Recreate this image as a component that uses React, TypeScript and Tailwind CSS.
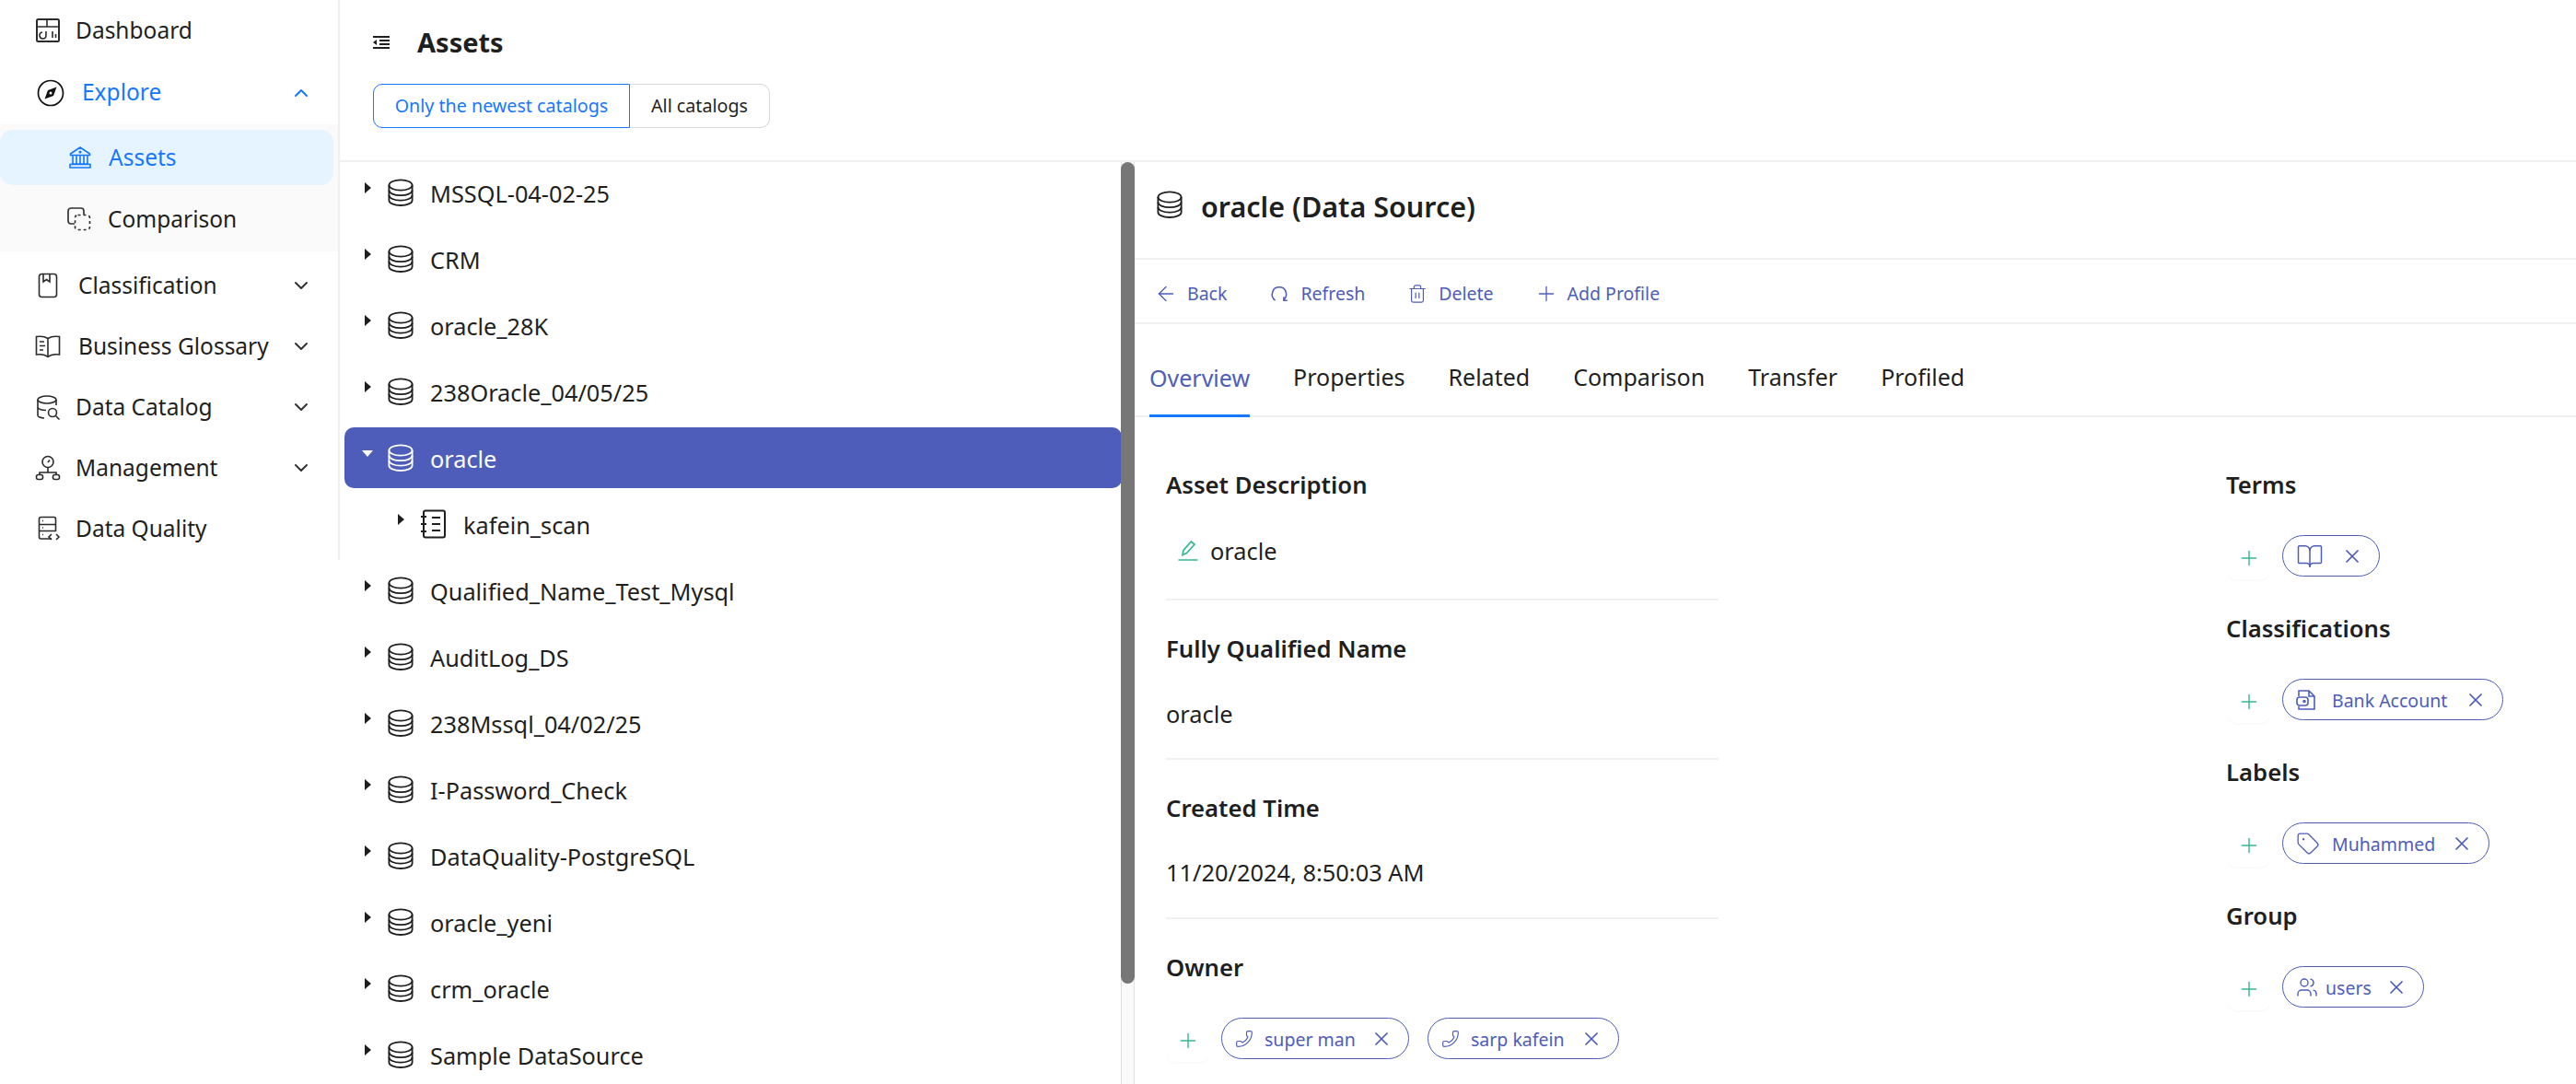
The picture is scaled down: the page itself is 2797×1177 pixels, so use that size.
import React from "react";
import { ChevronUp, ChevronDown, BookOpen, Plus, X, ArrowLeft, Trash2, Tag, Users, Phone } from "lucide-react";

const ink = "text-[#1f1f1f]";

function Db({ className = "" }: { className?: string }) {
  return (
    <svg viewBox="0 0 28 30" fill="none" stroke="currentColor" strokeWidth="1.8" className={className}>
      <ellipse cx="14" cy="7" rx="12.6" ry="5.6" />
      <path d="M1.4 7v16.4c0 3.1 5.6 5.6 12.6 5.6s12.6-2.5 12.6-5.6V7" />
      <path d="M1.4 12.6c0 3.1 5.6 5.6 12.6 5.6s12.6-2.5 12.6-5.6" />
      <path d="M1.4 18c0 3.1 5.6 5.6 12.6 5.6s12.6-2.5 12.6-5.6" />
    </svg>
  );
}

function NavIcon({ name }: { name: string }) {
  const c = "w-[28px] h-[28px] text-[#2b2b2b]";
  const p = { viewBox: "0 0 28 28", fill: "none", stroke: "currentColor", strokeWidth: 1.6, className: c };
  if (name === "dash")
    return (
      <svg {...p} strokeWidth={2}>
        <rect x="2" y="2" width="24" height="24" rx="1.5" />
        <path d="M2 10h24M13 2v8" strokeWidth={1.6} />
        <path d="M8 16a3.500 3.500 0 1 0 4 3.500V15M19 15v7M22.500 18v4" strokeWidth={1.6} />
      </svg>
    );
  if (name === "class")
    return (
      <svg {...p}>
        <rect x="4.500" y="1.500" width="19" height="25" rx="3" />
        <path d="M9 2v8l3.500-2.500L16 10V2" />
      </svg>
    );
  if (name === "book")
    return (
      <svg {...p}>
        <path d="M14 5.500C11 3.500 6 3 1.500 3.500V23c4.500-.6 9.500 0 12.500 2.500 3-2.500 8-3.100 12.500-2.500V3.500C22 3 17 3.500 14 5.500zM14 5.500v20" />
        <path d="M5 9h5M5 13.500h6M5 18h4" />
      </svg>
    );
  if (name === "catalog")
    return (
      <svg {...p}>
        <ellipse cx="13" cy="6" rx="10" ry="4" />
        <path d="M3 6v17c0 1.600 3 3 7 3M23 6v6M3 14c0 2 4 3.500 9 3.500" />
        <circle cx="19" cy="20" r="4.500" />
        <path d="M22.500 23.500l4 4" />
      </svg>
    );
  if (name === "mgmt")
    return (
      <svg {...p}>
        <circle cx="14" cy="7.500" r="6" />
        <path d="M14 8l2-2.500M14 13.500V19M5 22v-3h18v3" />
        <rect x="1.500" y="21.500" width="7" height="5" rx="2" />
        <rect x="19.500" y="21.500" width="7" height="5" rx="2" />
      </svg>
    );
  return (
    <svg {...p}>
      <path d="M18 25H6.500A2 2 0 0 1 4.500 23V3.500a2 2 0 0 1 2-2h14a2 2 0 0 1 2 2V17M4.500 9.500h18M4.500 16.500h18" />
      <path d="M8 5.500h1M8 13h1M8 20.500h1" />
      <path d="M18 20l-3 3 3 3M23 20l3 3-3 3" />
    </svg>
  );
}

function NavRow({ icon, label, gap, chevron }: { icon: string; label: string; gap: string; chevron?: boolean }) {
  return (
    <div className="flex items-center h-[66px] pl-[38px] pr-[28px]">
      <NavIcon name={icon} />
      <span className={`${gap} ${ink}`}>{label}</span>
      {chevron && <ChevronDown className="ml-auto w-[24px] h-[24px] text-[#333]" strokeWidth={2} />}
    </div>
  );
}

function Sidebar() {
  return (
    <aside className="w-[369px] shrink-0 h-[608px] border-r-2 border-[#f0f0f0] text-[24.5px]">
      <NavRow icon="dash" label="Dashboard" gap="ml-[16px]" />
      <div className="flex items-center pl-[40px] pr-[28px] h-[69px]">
        <svg viewBox="0 0 30 30" className="w-[30px] h-[30px]">
          <circle cx="15" cy="15" r="13.500" fill="none" stroke="#111" strokeWidth="1.7" />
          <path d="M21.500 8.500L18 18 8.500 21.500 12 12z" fill="#111" />
          <circle cx="15" cy="15" r="1.500" fill="#fff" />
        </svg>
        <span className="ml-[19px] text-[#1677ff]">Explore</span>
        <ChevronUp className="ml-auto w-[24px] h-[24px] text-[#1677ff]" strokeWidth={2} />
      </div>
      <div className="bg-[#fafafa] h-[138px] pt-[6px]">
        <div className="flex items-center h-[60px] w-[362px] rounded-[14px] bg-[#e6f4ff] pl-[75px] text-[#1677ff]">
          <svg viewBox="0 0 24 24" fill="none" stroke="currentColor" strokeWidth="1.6" className="w-[24px] h-[24px]">
            <path d="M12 1L1.500 8v1.500h21V8zM4 9.500V19M8 9.500V19M16 9.500V19M20 9.500V19M12 9.500V19M2.500 19h19M1 23h22v-3.500H1z" />
            <circle cx="12" cy="6" r="0.8" fill="currentColor" />
          </svg>
          <span className="ml-[19px]">Assets</span>
        </div>
        <div className="flex items-center h-[66px] mt-[4px] pl-[73px]">
          <svg viewBox="0 0 26 26" fill="none" stroke="#333" strokeWidth="1.7" className="w-[26px] h-[26px]">
            <path d="M8 18H4a3 3 0 0 1-3-3V4a3 3 0 0 1 3-3h11a3 3 0 0 1 3 3v4" />
            <rect x="8.500" y="8.500" width="16" height="16" rx="3" strokeDasharray="3 3" />
          </svg>
          <span className={`ml-[18px] ${ink}`}>Comparison</span>
        </div>
      </div>
      <div className="h-[4px]" />
      <NavRow icon="class" label="Classification" gap="ml-[19px]" chevron />
      <NavRow icon="book" label="Business Glossary" gap="ml-[19px]" chevron />
      <NavRow icon="catalog" label="Data Catalog" gap="ml-[16px]" chevron />
      <NavRow icon="mgmt" label="Management" gap="ml-[16px]" chevron />
      <NavRow icon="dq" label="Data Quality" gap="ml-[16px]" />
    </aside>
  );
}

const nodes = ["MSSQL-04-02-25", "CRM", "oracle_28K", "238Oracle_04/05/25", "oracle", "kafein_scan", "Qualified_Name_Test_Mysql", "AuditLog_DS", "238Mssql_04/02/25", "I-Password_Check", "DataQuality-PostgreSQL", "oracle_yeni", "crm_oracle", "Sample DataSource"];

function Tree() {
  return (
    <div className="w-[863px] shrink-0 relative overflow-hidden text-[25.3px] pl-[5px]">
      {nodes.map((n) => {
        const sel = n === "oracle";
        const child = n === "kafein_scan";
        return (
          <div key={n} className={`flex items-center h-[66px] mb-[6px] w-[844px] rounded-[10px] ${sel ? "bg-[#4d5db9] text-white" : ink} ${child ? "pl-[56px]" : "pl-[20px]"}`}>
            <span className="w-[10px] h-[10px] -mt-[10px] flex items-center justify-center">
              {sel ? (
                <span className="border-x-[6px] border-x-transparent border-t-[7px] border-t-white" />
              ) : (
                <span className="border-y-[6px] border-y-transparent border-l-[7px] border-l-[#1f1f1f]" />
              )}
            </span>
            {child ? (
              <svg viewBox="0 0 28 32" fill="none" stroke="currentColor" strokeWidth="2" className="ml-[16px] w-[28px] h-[32px]">
                <rect x="4" y="1.500" width="23" height="29" rx="2" />
                <path d="M1 8h6M1 16h6M1 24h6M13 9h9M13 16h9M13 23h9" />
              </svg>
            ) : (
              <Db className="ml-[17px] w-[28px] h-[30px]" />
            )}
            <span className={`${child ? "ml-[19px]" : "ml-[18px]"} mt-[3px]`}>{n}</span>
          </div>
        );
      })}
      <div className="absolute right-0 top-0 bottom-0 w-[15px] bg-[#fafafa] border-x border-[#e0e0e0]">
        <div className="h-[892px] -mx-px rounded-full bg-[#777777]" />
      </div>
    </div>
  );
}

function AddBtn() {
  return (
    <span className="w-[47px] h-[47px] mt-[1px] shrink-0 rounded-[10px] bg-white shadow-[0_2px_0_rgba(0,0,0,0.02)] flex items-center justify-center">
      <Plus className="w-[26px] h-[26px] text-[#36b795]" strokeWidth={1.3} />
    </span>
  );
}

function Chip({ icon, label, width, gap = "ml-[14px]" }: { icon: React.ReactNode; label?: string; width: string; gap?: string }) {
  return (
    <span className={`${width} h-[45px] ml-[13px] rounded-full border-[1.5px] border-[#4d5db9] flex items-center pl-[14px] text-[19.5px] text-[#4d5db9]`}>
      {icon}
      {label && <span className={`${gap} mt-[2px]`}>{label}</span>}
      <X className="ml-auto mr-[17px] w-[24px] h-[24px]" strokeWidth={1.7} />
    </span>
  );
}

function Side({ title, children, mt }: { title: string; children: React.ReactNode; mt: string }) {
  return (
    <div className={mt}>
      <div className={`text-[25.7px] leading-[34px] font-semibold ${ink}`}>{title}</div>
      <div className="flex items-start mt-[37px] ml-[1px]">{children}</div>
    </div>
  );
}

function Field({ title, children, h }: { title: string; children: React.ReactNode; h: string }) {
  return (
    <div className={`${h} border-b-2 border-[#f0f0f0]`}>
      <div className={`text-[25.7px] leading-[34px] font-semibold ${ink}`}>{title}</div>
      {children}
    </div>
  );
}

function Detail() {
  const phone = <Phone className="w-[20px] h-[20px] -scale-x-100" strokeWidth={1.4} />;
  const tab = "h-[75px] ml-[47px] flex items-center pb-[8px]";
  return (
    <div className="flex-1 min-w-0 flex flex-col">
      <div className="h-[106px] flex items-center pl-[24px] pb-[6px] border-b-2 border-[#f0f0f0]">
        <Db className={`w-[28px] h-[30px] -mt-[6px] ${ink}`} />
        <span className={`ml-[20px] text-[30.5px] font-semibold ${ink}`}>oracle (Data Source)</span>
      </div>
      <div className="h-[70px] flex items-center pl-[24px] pt-[5px] border-b-2 border-[#f0f0f0] text-[19.5px] text-[#4d5db9]">
        <ArrowLeft className="w-[26px] h-[26px] -mx-[3px]" strokeWidth={1.2} /><span className="ml-[13px]">Back</span>
        <svg viewBox="0 0 20 20" fill="none" stroke="currentColor" strokeWidth="1.4" className="w-[22px] h-[22px] -mx-[1px] ml-[46px]">
          <path d="M6 16.500C3 14.500 2.500 11 3.500 8 4.500 5 7 3.500 10 3.500s5.500 1.500 6.500 4.500c1 3 .5 6-2.500 8.500M14.500 13v3.500H18" />
        </svg>
        <span className="ml-[13px]">Refresh</span>
        <Trash2 className="w-[22px] h-[22px] ml-[46px] -mr-[1px]" strokeWidth={1.3} /><span className="ml-[13px]">Delete</span>
        <Plus className="w-[26px] h-[26px] ml-[44px] -mr-[3px]" strokeWidth={1.2} /><span className="ml-[13px]">Add Profile</span>
      </div>
      <div className={`h-[101px] flex items-end pl-[16px] border-b-2 border-[#f0f0f0] text-[25px] ${ink}`}>
        <span className="h-[75px] -mb-[2px] flex items-center pb-[6px] border-b-[3px] border-[#1677ff] text-[#4d5db9]">Overview</span>
        <span className={tab}>Properties</span>
        <span className={tab}>Related</span>
        <span className={tab}>Comparison</span>
        <span className={tab}>Transfer</span>
        <span className={tab}>Profiled</span>
      </div>
      <div className={`flex pl-[34px] pt-[57px] text-[25.4px] ${ink}`}>
        <div className="w-[600px] shrink-0">
          <Field title="Asset Description" h="h-[142px]">
            <div className="flex items-center mt-[34px] h-[40px]">
              <svg viewBox="0 0 22 24" fill="none" stroke="#36b795" strokeWidth="1.7" className="ml-[13px] w-[22px] h-[24px]">
                <path d="M5 16.500L6 11.500 14.500 2 18 5 9.500 14.500zM0.500 22h21" />
              </svg>
              <span className="ml-[13px]">oracle</span>
            </div>
          </Field>
          <Field title="Fully Qualified Name" h="h-[173px] pt-[36px]">
            <div className="mt-[33px] leading-[40px]">oracle</div>
          </Field>
          <Field title="Created Time" h="h-[173px] pt-[36px]">
            <div className="mt-[32px] leading-[40px]">11/20/2024, 8:50:03 AM</div>
          </Field>
          <div className="pt-[36px]">
            <div className="text-[25.7px] leading-[34px] font-semibold">Owner</div>
            <div className="flex items-start mt-[37px]">
              <AddBtn />
              <Chip width="w-[204px]" label="super man" gap="ml-[12px]" icon={phone} />
              <Chip width="w-[208px] !ml-[20px]" label="sarp kafein" gap="ml-[12px]" icon={phone} />
            </div>
          </div>
        </div>
        <div className="ml-[551px] w-[320px]">
          <Side title="Terms" mt="">
            <AddBtn />
            <Chip width="w-[106px]" icon={<BookOpen className="w-[30px] h-[30px]" strokeWidth={1.2} />} />
          </Side>
          <Side title="Classifications" mt="mt-[37px]">
            <AddBtn />
            <Chip width="w-[240px]" label="Bank Account" gap="ml-[17px]" icon={
              <svg viewBox="0 0 22 24" fill="none" stroke="currentColor" strokeWidth="1.6" className="w-[22px] h-[24px]">
                <path d="M3 8V2h11l6 6v14H3v-3M14 2v6h6" />
                <rect x="1" y="9" width="12" height="9" rx="3" />
                <circle cx="9" cy="13.500" r="1" />
              </svg>
            } />
          </Side>
          <Side title="Labels" mt="mt-[37px]">
            <AddBtn />
            <Chip width="w-[225px]" label="Muhammed" gap="ml-[13px]" icon={<Tag className="w-[26px] h-[26px]" strokeWidth={1.2} />} />
          </Side>
          <Side title="Group" mt="mt-[37px]">
            <AddBtn />
            <Chip width="w-[154px]" label="users" gap="ml-[8px]" icon={<Users className="w-[24px] h-[24px]" strokeWidth={1.4} />} />
          </Side>
        </div>
      </div>
    </div>
  );
}

export default function App() {
  return (
    <div className="w-[2797px] h-[1177px] bg-white flex overflow-hidden" style={{ fontFamily: '"Noto Sans", "Open Sans", sans-serif' }}>
      <Sidebar />
      <main className="flex-1 min-w-0 flex flex-col">
        <header className="h-[176px] shrink-0 border-b-2 border-[#f0f0f0] pl-[36px]">
          <div className="flex items-center h-[91px]">
            <svg viewBox="0 0 18 14" fill="none" stroke="#1f1f1f" strokeWidth="1.8" className="w-[18px] h-[14px]">
              <path d="M0 1h18M7 5h11M7 9h11M0 13h18" />
              <path d="M4 4v6L0 7z" fill="#1f1f1f" stroke="none" />
            </svg>
            <span className={`ml-[30px] text-[29px] font-bold ${ink}`}>Assets</span>
          </div>
          <div className="flex text-[19.7px] h-[48px]">
            <span className="w-[279px] flex items-center justify-center rounded-l-[10px] border-[1.5px] border-[#1677ff] text-[#1677ff]">Only the newest catalogs</span>
            <span className={`w-[152px] flex items-center justify-center rounded-r-[10px] border-[1.5px] border-l-0 border-[#d9d9d9] ${ink}`}>All catalogs</span>
          </div>
        </header>
        <div className="flex-1 min-h-0 flex">
          <Tree />
          <Detail />
        </div>
      </main>
    </div>
  );
}
